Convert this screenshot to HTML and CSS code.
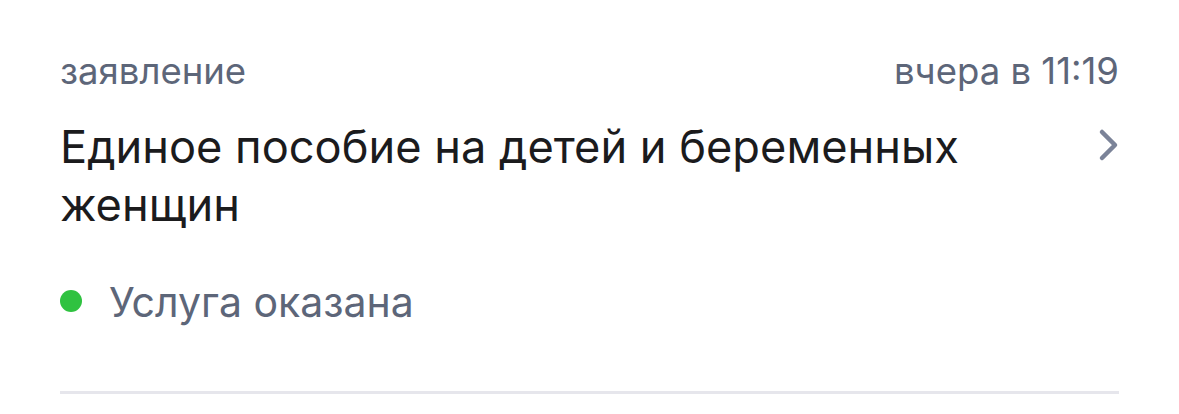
FILE: index.html
```html
<!DOCTYPE html>
<html lang="ru">
<head>
<meta charset="utf-8">
<link rel="stylesheet" href="styles.css">
</head>
<body>
<div class="card">
  <div class="meta">
    <span class="kind">заявление</span>
    <span class="time">вчера в 11:19</span>
  </div>
  <div class="title-row">
    <div class="title">Единое пособие на детей и беременных женщин</div>
    <svg class="chevron" width="24" height="36" viewBox="0 0 24 36"><path d="M5 5 L18 18 L5 31" fill="none" stroke="#7b8398" stroke-width="4.5" stroke-linecap="round" stroke-linejoin="round"/></svg>
  </div>
  <div class="status">
    <span class="dot"></span>
    <span class="status-text">Услуга оказана</span>
  </div>
  <div class="divider"></div>
</div>
</body>
</html>
```
FILE: styles.css
```css
html, body {
  margin: 0;
  padding: 0;
  background: #ffffff;
}
body {
  font-family: "Inter", "Noto Sans", sans-serif;
}
.card {
  padding: 50px 60px 0 60px;
}
.meta {
  display: flex;
  justify-content: space-between;
  align-items: baseline;
  font-size: 36.5px;
  line-height: 42px;
  color: #5d6679;
}
.title-row {
  display: flex;
  justify-content: space-between;
  align-items: flex-start;
  margin-top: 26px;
}
.title {
  font-size: 45.2px;
  line-height: 58px;
  color: #1b1b1d;
  max-width: 920px;
}
.chevron {
  margin-top: 9px;
  margin-right: -2px;
  flex: none;
}
.status {
  display: flex;
  align-items: center;
  gap: 27px;
  margin-top: 45px;
}
.dot {
  width: 22px;
  height: 22px;
  border-radius: 50%;
  background: #2fc240;
  flex: none;
  margin-top: -3px;
}
.status-text {
  font-size: 41px;
  line-height: 46px;
  color: #5d6679;
}
.divider {
  height: 3px;
  background: #e6e6ec;
  margin-top: 66px;
}
```
